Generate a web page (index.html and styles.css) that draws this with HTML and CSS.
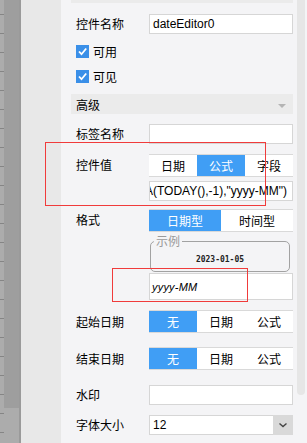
FILE: index.html
```html
<!DOCTYPE html>
<html lang="zh">
<head>
<meta charset="utf-8">
<link rel="stylesheet" href="styles.css">
</head>
<body>
<div class="app">
  <div class="ruler"></div>
  <div class="lstrip"><div class="lthumb"></div></div>
  <div class="sep"></div>
  <div class="gutter"></div>
  <div class="panel">
    <div class="tail"></div>

    <div class="row m11">
      <span class="lbl">控件名称</span>
      <div class="input h20"><span class="latin">dateEditor0</span></div>
    </div>

    <div class="check m11"><span class="cb"><svg viewBox="0 0 13 13" width="13" height="13"><path d="M3 6.5 L5.5 9.2 L10.2 3.5" fill="none" stroke="#fff" stroke-width="1.8"/></svg></span>可用</div>
    <div class="check m12"><span class="cb"><svg viewBox="0 0 13 13" width="13" height="13"><path d="M3 6.5 L5.5 9.2 L10.2 3.5" fill="none" stroke="#fff" stroke-width="1.8"/></svg></span>可见</div>

    <div class="section m11"><span>高级</span><span class="caret"></span></div>

    <div class="row m10">
      <span class="lbl">标签名称</span>
      <div class="input h20"></div>
    </div>

    <div class="row top m10">
      <span class="lbl lbl-seg">控件值</span>
      <div class="col">
        <div class="seg">
          <span class="opt">日期</span>
          <span class="opt on">公式</span>
          <span class="opt">字段</span>
        </div>
        <div class="input h20 formula"><span class="latin">=FORMAT(DATEDELTA(TODAY(),-1),"yyyy-MM")</span></div>
      </div>
    </div>

    <div class="row top m8">
      <span class="lbl lbl-seg">格式</span>
      <div class="col">
        <div class="seg">
          <span class="opt on">日期型</span>
          <span class="opt">时间型</span>
        </div>
        <fieldset class="sample">
          <legend>示例</legend>
          <div class="sample-val">2023-01-05</div>
        </fieldset>
        <div class="input h27 fmt"><span class="fmt-text">yyyy-MM</span></div>
      </div>
    </div>

    <div class="row m10">
      <span class="lbl">起始日期</span>
      <div class="seg grow">
        <span class="opt on">无</span>
        <span class="opt">日期</span>
        <span class="opt">公式</span>
      </div>
    </div>

    <div class="row m14">
      <span class="lbl">结束日期</span>
      <div class="seg grow">
        <span class="opt on">无</span>
        <span class="opt">日期</span>
        <span class="opt">公式</span>
      </div>
    </div>

    <div class="row m15">
      <span class="lbl">水印</span>
      <div class="input h20"></div>
    </div>

    <div class="row m10">
      <span class="lbl">字体大小</span>
      <div class="select">
        <span class="latin sel-val">12</span>
        <span class="sel-btn"><svg viewBox="0 0 20 20" width="20" height="20"><path d="M6.5 8.5 L10 11.5 L13.5 8.5" fill="none" stroke="#444" stroke-width="1.4"/></svg></span>
      </div>
    </div>

    <div class="row m10">
      <span class="lbl"></span>
      <div class="seg grow">
        <span class="opt"></span>
        <span class="opt on"></span>
      </div>
    </div>
  </div>
  <div class="scroll"><div class="thumb"></div></div>

  <div class="mark mark1"></div>
  <div class="mark mark2"></div>
</div>
</body>
</html>
```

FILE: styles.css
```css
* { box-sizing: border-box; }
html, body { margin: 0; padding: 0; }
body {
  width: 307px;
  height: 443px;
  overflow: hidden;
  font-family: "Noto Sans CJK SC", "Liberation Sans", sans-serif;
  font-size: 12px;
  color: #000;
}
.app {
  position: relative;
  display: flex;
  width: 307px;
  height: 443px;
  background: #f4f4f6;
  overflow: hidden;
}
.ruler {
  width: 4px;
  flex: none;
  background-color: #acacac;
  background-image: linear-gradient(to bottom, transparent 0, transparent 14px, #858585 14px, #858585 15px, transparent 15px);
  background-size: 4px 19px;
  background-repeat: repeat-y;
}
.lstrip {
  width: 15px;
  flex: none;
  background: #acacac;
}
.lthumb {
  height: 408px;
  background: #9e9e9e;
}
.sep {
  width: 2px;
  flex: none;
  background: #9a9a9a;
}
.gutter {
  width: 40px;
  flex: none;
  background: #e8e8e8;
}
.panel {
  width: 236px;
  flex: none;
  padding: 0 4px 0 10px;
  display: flex;
  flex-direction: column;
}
.tail {
  height: 3px;
  flex: none;
  background: #ebebeb;
}
.m8 { margin-top: 8px; }
.m10 { margin-top: 10px; }
.m11 { margin-top: 11px; }
.m12 { margin-top: 12px; }
.m14 { margin-top: 14px; }
.m15 { margin-top: 15px; }

.row {
  display: flex;
  align-items: center;
  flex: none;
}
.row.top { align-items: flex-start; }
.lbl {
  width: 78px;
  flex: none;
  padding-left: 5px;
  line-height: 16px;
  white-space: nowrap;
}
.lbl-seg { margin-top: 3px; }
.col {
  flex: 1;
  display: flex;
  flex-direction: column;
  min-width: 0;
}
.latin {
  font-family: "Liberation Sans", Arial, sans-serif;
  font-size: 12px;
  white-space: nowrap;
}
.input {
  flex: 1;
  min-width: 0;
  background: #fff;
  border: 1px solid #d6d6d6;
  display: flex;
  align-items: center;
  padding: 0 3px;
  overflow: hidden;
}
.h20 { height: 20px; }
.h27 { height: 27px; }
.formula {
  margin-top: 4px;
  justify-content: flex-end;
  padding-right: 5px;
  flex: none;
}
.fmt {
  flex: none;
  margin-top: 1px;
  padding-left: 2px;
}
.fmt-text {
  font-family: "Liberation Sans", Arial, sans-serif;
  font-size: 11px;
  font-style: italic;
  letter-spacing: 0.2px;
}

.check {
  display: flex;
  align-items: center;
  height: 13px;
  padding-left: 5px;
  gap: 4px;
  flex: none;
  line-height: 13px;
}
.cb {
  width: 13px;
  height: 13px;
  background: #3a8fe8;
  display: block;
  flex: none;
}
.cb svg { display: block; }

.section {
  height: 20px;
  flex: none;
  background: #ebebeb;
  display: flex;
  align-items: center;
  justify-content: space-between;
  padding: 0 7px 0 5px;
}
.caret {
  width: 0;
  height: 0;
  border-left: 4px solid transparent;
  border-right: 4px solid transparent;
  border-top: 4px solid #b4b4b4;
  margin-top: 3px;
}

.seg {
  display: flex;
  height: 23px;
  background: #fff;
  border-top: 1px solid #d9d9d9;
  border-bottom: 1px solid #d9d9d9;
  flex: none;
}
.seg.grow { flex: 1; }
.opt {
  flex: 1;
  display: flex;
  align-items: center;
  justify-content: center;
  color: #000;
}
.opt.on {
  background: #409ef5;
  color: #fff;
}

.sample {
  margin: 2px 3px 0 1px;
  padding: 0;
  border: 1px solid #a2a2a2;
  border-radius: 5px;
  flex: none;
  min-width: 0;
}
.sample legend {
  margin-left: 3px;
  padding: 0 2px;
  color: #9a9a9a;
  font-size: 12px;
  line-height: 14px;
}
.sample-val {
  height: 23px;
  display: flex;
  align-items: center;
  justify-content: center;
  font-family: "DejaVu Sans Mono", monospace;
  font-size: 8px;
  font-weight: bold;
  color: #222;
  padding-bottom: 1px;
}

.select {
  flex: 1;
  height: 20px;
  display: flex;
  background: #fff;
  border: 1px solid #d6d6d6;
  border-right: none;
}
.sel-val {
  flex: 1;
  display: flex;
  align-items: center;
  padding-left: 3px;
}
.sel-btn {
  width: 20px;
  height: 20px;
  margin-top: -1px;
  background: #d9d9d9;
  flex: none;
}
.sel-btn svg { display: block; }

.scroll {
  width: 10px;
  flex: none;
}
.thumb {
  width: 8px;
  height: 395px;
  background: #e6e6e6;
  border-radius: 0 0 4px 4px;
}

.mark {
  position: absolute;
  border: 1px solid #f03b3b;
  pointer-events: none;
}
.mark1 { left: 45px; top: 142px; width: 221px; height: 64px; }
.mark2 { left: 112px; top: 268px; width: 136px; height: 34px; }
```
